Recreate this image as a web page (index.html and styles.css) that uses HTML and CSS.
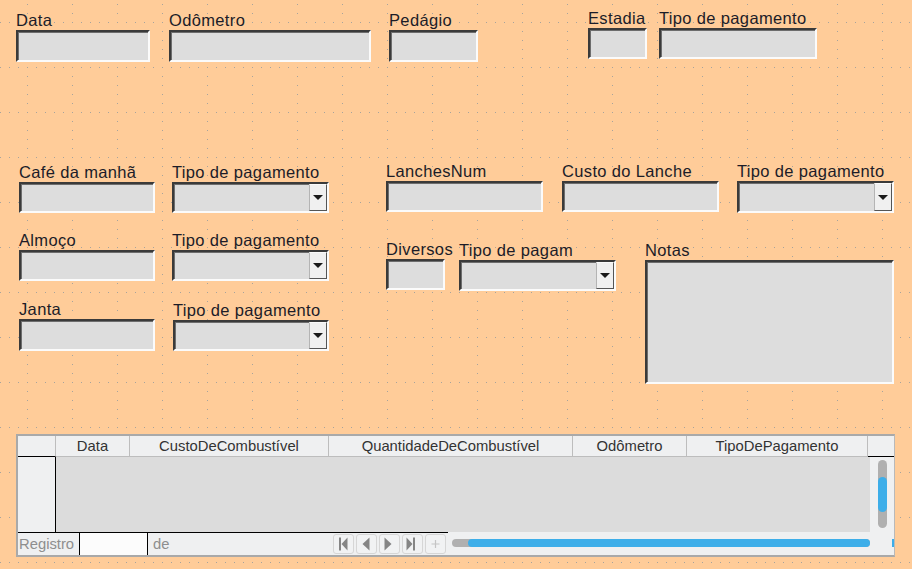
FILE: index.html
```html
<!DOCTYPE html>
<html lang="pt">
<head>
<meta charset="utf-8">
<title>Formulário de despesas</title>
<link rel="stylesheet" href="styles.css">
</head>
<body>
<div class="form">
  <div class="row top-row">
    <div class="ctl w134 mt2"><div class="lbl">Data</div><div class="fld h32"></div></div>
    <div class="ctl w202 mt2 ml19"><div class="lbl">Odômetro</div><div class="fld h32"></div></div>
    <div class="ctl w89 mt2 ml18"><div class="lbl">Pedágio</div><div class="fld h32"></div></div>
    <div class="ctl w59 ml110"><div class="lbl">Estadia</div><div class="fld h31"></div></div>
    <div class="ctl w158 ml12"><div class="lbl">Tipo de pagamento</div><div class="fld h31"></div></div>
  </div>

  <div class="mid">
    <div class="col-left">
      <div class="row mt1">
        <div class="ctl w136"><div class="lbl">Café da manhã</div><div class="fld h31"></div></div>
        <div class="ctl w157 ml17"><div class="lbl">Tipo de pagamento</div><div class="fld h31 dd"><span class="dd-btn"><i class="tri"></i></span></div></div>
      </div>
      <div class="row mt18">
        <div class="ctl w136"><div class="lbl">Almoço</div><div class="fld h31"></div></div>
        <div class="ctl w157 ml17"><div class="lbl">Tipo de pagamento</div><div class="fld h31 dd"><span class="dd-btn"><i class="tri"></i></span></div></div>
      </div>
      <div class="row mt19">
        <div class="ctl w136"><div class="lbl">Janta</div><div class="fld h32"></div></div>
        <div class="ctl w156 ml18 mt1"><div class="lbl">Tipo de pagamento</div><div class="fld h31 dd"><span class="dd-btn"><i class="tri"></i></span></div></div>
      </div>
    </div>

    <div class="col-right">
      <div class="row">
        <div class="ctl w157"><div class="lbl">LanchesNum</div><div class="fld h31"></div></div>
        <div class="ctl w157 ml19"><div class="lbl">Custo do Lanche</div><div class="fld h31"></div></div>
        <div class="ctl w157 ml18"><div class="lbl">Tipo de pagamento</div><div class="fld h32 dd"><span class="dd-btn"><i class="tri"></i></span></div></div>
      </div>
      <div class="row mt27">
        <div class="ctl w59"><div class="lbl">Diversos</div><div class="fld h31"></div></div>
        <div class="ctl w157 ml14 mt1"><div class="lbl">Tipo de pagam</div><div class="fld h31 dd"><span class="dd-btn"><i class="tri"></i></span></div></div>
        <div class="ctl w249 ml29 mt1"><div class="lbl">Notas</div><div class="fld h124"></div></div>
      </div>
    </div>
  </div>

  <div class="table">
    <div class="thead">
      <div class="th corner"></div>
      <div class="th c-data">Data</div>
      <div class="th c-custo">CustoDeCombustível</div>
      <div class="th c-qtd">QuantidadeDeCombustível</div>
      <div class="th c-odo">Odômetro</div>
      <div class="th c-tipo">TipoDePagamento</div>
      <div class="th c-end"></div>
    </div>
    <div class="tbody">
      <div class="rowhdr"></div>
      <div class="cells"></div>
      <div class="vstrip"><div class="vtrack"><div class="vthumb"></div></div></div>
    </div>
    <div class="tnav">
      <div class="nav-left">
        <span class="nav-text">Registro</span>
        <span class="nav-box"></span>
        <span class="nav-text de">de</span>
        <div class="nav-btns">
          <span class="nbtn"><svg width="21" height="20" viewBox="0 0 21 20"><rect x="6" y="3.5" width="2" height="13" fill="#858585"/><polygon points="14.5,3.5 8.5,10 14.5,16.5" fill="#858585"/></svg></span>
          <span class="nbtn"><svg width="21" height="20" viewBox="0 0 21 20"><polygon points="13.5,3.5 6.5,10 13.5,16.5" fill="#858585"/></svg></span>
          <span class="nbtn"><svg width="21" height="20" viewBox="0 0 21 20"><polygon points="5.5,3.5 12.5,10 5.5,16.5" fill="#858585"/></svg></span>
          <span class="nbtn"><svg width="21" height="20" viewBox="0 0 21 20"><polygon points="4.5,3.5 10.5,10 4.5,16.5" fill="#858585"/><rect x="11" y="3.5" width="2" height="13" fill="#858585"/></svg></span>
          <span class="nbtn"><svg width="21" height="20" viewBox="0 0 21 20"><path d="M10.5 6v8M6.5 10h8" stroke="#c4c4c4" stroke-width="1.2"/></svg></span>
        </div>
      </div>
      <div class="nav-right">
        <div class="htrack"><div class="hthumb"></div></div>
        <span class="hmark"></span>
      </div>
    </div>
  </div>
</div>
</body>
</html>
```

FILE: styles.css
```css
* { box-sizing: border-box; }

html, body {
  margin: 0;
  padding: 0;
}

body {
  width: 912px;
  height: 569px;
  overflow: hidden;
  font-family: "Liberation Sans", Arial, sans-serif;
  color: #1c1c28;
  background-color: #ffcc99;
  background-image:
    conic-gradient(at 1px 1px, transparent 270deg, #a7a39c 0),
    conic-gradient(at 1px 1px, transparent 270deg, #a7a39c 0);
  background-size: 9px 45px, 45px 9px;
  background-position: 0 22px, 27px 4px;
}

.form {
  width: 912px;
  height: 569px;
}

.row {
  display: flex;
  align-items: flex-start;
}

.top-row {
  padding: 9px 0 0 16px;
  height: 62px;
}

.ctl {
  display: flex;
  flex-direction: column;
  flex: none;
}

.lbl {
  font-size: 16.5px;
  letter-spacing: 0.35px;
  line-height: 18px;
  height: 18px;
  margin-bottom: 1px;
  white-space: nowrap;
  color: #1c1c28;
}

.fld {
  width: 100%;
  background: #dddddd;
  border-style: solid;
  border-width: 2px;
  border-color: #3a3a3a #fbfbfb #fbfbfb #3a3a3a;
  box-shadow: inset 1px 1px 0 #6d6d6d;
}

.dd {
  display: flex;
  justify-content: flex-end;
}

.dd-btn {
  width: 18px;
  height: 100%;
  background: #f0f0f0;
  border-left: 1px solid #b4b4b4;
  border-top: 1px solid #fafafa;
  border-right: 1px solid #555;
  border-bottom: 1px solid #555;
  display: flex;
  align-items: center;
  justify-content: center;
}

.tri {
  display: block;
  width: 0;
  height: 0;
  border-left: 5px solid transparent;
  border-right: 5px solid transparent;
  border-top: 5px solid #1a1a1a;
}

/* sizes */
.w59 { width: 59px; }
.w89 { width: 89px; }
.w134 { width: 134px; }
.w136 { width: 136px; }
.w156 { width: 156px; }
.w157 { width: 157px; }
.w158 { width: 158px; }
.w202 { width: 202px; }
.w249 { width: 249px; }
.h31 { height: 31px; }
.h32 { height: 32px; }
.h124 { height: 124px; }

.mt1 { margin-top: 1px; }
.mt2 { margin-top: 2px; }
.mt18 { margin-top: 18px; }
.mt19 { margin-top: 19px; }
.mt27 { margin-top: 27px; }
.ml12 { margin-left: 12px; }
.ml14 { margin-left: 14px; }
.ml17 { margin-left: 17px; }
.ml18 { margin-left: 18px; }
.ml19 { margin-left: 19px; }
.ml29 { margin-left: 29px; }
.ml110 { margin-left: 110px; }

/* middle section */
.mid {
  display: flex;
  align-items: flex-start;
  margin-top: 100px;
  padding-left: 19px;
  height: 222px;
}

.col-left {
  width: 310px;
  flex: none;
}

.col-right {
  margin-left: 57px;
  flex: none;
}

/* table control */
.table {
  margin: 50px 0 0 16px;
  width: 879px;
  height: 123px;
  border: 2px solid #a9a9a9;
  border-right: 1px solid #b9b9b9;
  background: #eff0f1;
  display: flex;
  flex-direction: column;
  font-size: 14.8px;
}

.thead {
  display: flex;
  height: 21px;
  flex: none;
}

.th {
  height: 21px;
  line-height: 20px;
  text-align: center;
  color: #333;
  white-space: nowrap;
  border-right: 1px solid #bdbdbd;
  border-bottom: 1px solid #bdbdbd;
  flex: none;
}

.corner { width: 38px; border-bottom-color: #000; }
.c-data { width: 74px; }
.c-custo { width: 199px; }
.c-qtd { width: 244px; }
.c-odo { width: 114px; }
.c-tipo { width: 181px; }
.c-end { width: 26px; border-right: none; border-bottom-color: #000; }

.tbody {
  display: flex;
  height: 75px;
  flex: none;
}

.rowhdr {
  width: 38px;
  border-right: 1px solid #000;
  background: #eff0f1;
}

.cells {
  width: 814px;
  background: #dcdcdc;
}

.vstrip {
  width: 24px;
  padding: 3px 0 0 8px;
}

.vtrack {
  width: 9px;
  height: 68px;
  border-radius: 5px;
  background: #b0b0b0;
  padding-top: 17px;
}

.vthumb {
  width: 9px;
  height: 35px;
  border-radius: 5px;
  background: #3daee9;
}

.tnav {
  display: flex;
  height: 23px;
  flex: none;
}

.nav-left {
  width: 430px;
  border-top: 1px solid #000;
  display: flex;
  align-items: stretch;
}

.nav-text {
  color: #8e8e8e;
  line-height: 22px;
  padding-left: 1px;
}

.nav-box {
  width: 69px;
  margin-left: 5px;
  background: #fcfcfc;
  border-left: 1px solid #000;
  border-right: 1px solid #000;
}

.de {
  padding-left: 5px;
}

.nav-btns {
  display: flex;
  gap: 2px;
  margin-left: auto;
  margin-right: 2px;
  padding-top: 1px;
  height: 21px;
}

.nbtn {
  width: 21px;
  height: 20px;
  border: 1px solid #d6d6d6;
  border-radius: 3px;
  background: #f1f2f3;
  display: flex;
  align-items: center;
  justify-content: center;
}

.nbtn svg {
  display: block;
  flex: none;
}

.nav-right {
  width: 446px;
  display: flex;
  align-items: flex-start;
  padding: 7px 0 0 4px;
}

.htrack {
  width: 418px;
  height: 8px;
  border-radius: 4px;
  background: #b0b0b0;
  padding-left: 16px;
}

.hthumb {
  width: 402px;
  height: 8px;
  border-radius: 4px;
  background: #3daee9;
}

.hmark {
  width: 2px;
  height: 8px;
  margin-left: 22px;
  background: #3daee9;
}
```
